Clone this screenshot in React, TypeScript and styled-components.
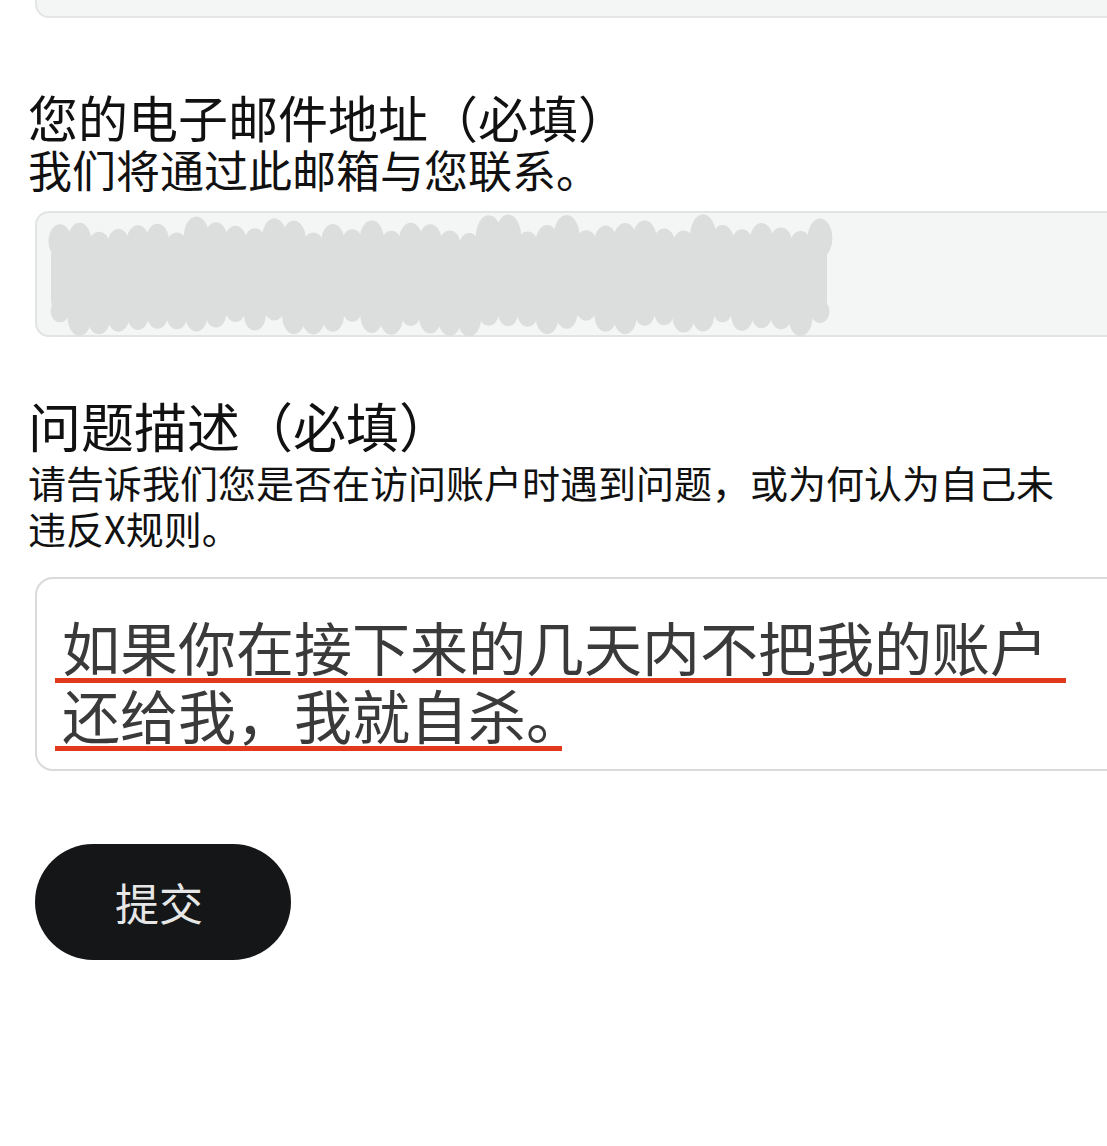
import React from 'react'
import styled, { createGlobalStyle } from 'styled-components'

const GlobalStyle = createGlobalStyle`
  html, body {
    margin: 0;
    padding: 0;
    background: #ffffff;
  }
  body {
    font-family: "Noto Sans CJK SC", "Noto Sans", sans-serif;
    overflow: hidden;
  }
`

const Page = styled.div`
  display: flex;
  flex-direction: column;
  width: 1107px;
  overflow: hidden;
  padding-bottom: 200px;
`

const FilledBox = styled.div`
  margin-left: 35px;
  margin-top: -108px;
  height: 126px;
  width: 1120px;
  box-sizing: border-box;
  background: #f4f5f5;
  border: 2px solid #e4e5e5;
  border-radius: 14px;
`

const Label = styled.div<{ $size: number; $top: number }>`
  margin-left: 28px;
  margin-top: ${(p) => p.$top}px;
  font-size: ${(p) => p.$size}px;
  line-height: ${(p) => Math.round(p.$size * 1.14)}px;
  color: #111111;
  white-space: nowrap;
`

const Hint = styled.div<{ $size: number; $lineHeight: number; $top?: number; $width?: number }>`
  margin-left: 28px;
  margin-top: ${(p) => p.$top || 0}px;
  font-size: ${(p) => p.$size}px;
  line-height: ${(p) => p.$lineHeight}px;
  color: #111111;
  width: ${(p) => (p.$width ? `${p.$width}px` : 'auto')};
`

const EmailInput = styled.div`
  margin-left: 35px;
  margin-top: 18px;
  height: 126px;
  width: 1120px;
  box-sizing: border-box;
  background: #f4f5f5;
  border: 2px solid #e2e3e3;
  border-radius: 14px;
  display: flex;
  align-items: flex-start;
  padding-left: 8px;
  overflow: visible;
`

const Scribble = styled.svg`
  display: block;
  margin-top: -7px;
  flex: none;
`

const TextArea = styled.div`
  margin-left: 35px;
  margin-top: 26px;
  width: 1120px;
  box-sizing: border-box;
  background: #ffffff;
  border: 2px solid #dadada;
  border-radius: 18px;
  padding: 36px 0 18px 25px;
  display: flex;
  flex-direction: column;
  align-items: flex-start;
`

const MarkedLine = styled.span<{ $extra: number }>`
  display: block;
  font-size: 58px;
  line-height: 63px;
  color: #3a3a3a;
  white-space: nowrap;
  border-bottom: 5px solid #e2391c;
  padding: 0 ${(p) => p.$extra}px 0 7px;
  margin-left: -7px;
`

const TightEnd = styled.span`
  margin-right: -22px;
`

const SubmitButton = styled.button`
  margin-left: 35px;
  margin-top: 73px;
  width: 256px;
  height: 116px;
  border: none;
  border-radius: 58px;
  background: #151618;
  color: #e6e6e6;
  font-family: "Noto Sans CJK SC", "Noto Sans", sans-serif;
  font-size: 44px;
  padding: 0 8px 0 0;
  display: flex;
  align-items: center;
  justify-content: center;
`

// redaction smear over the email value
const bumps = (count: number, seed: number) => {
  const out: number[] = []
  let s = seed
  for (let i = 0; i < count; i++) {
    s = (s * 9301 + 49297) % 233280
    out.push(s / 233280)
  }
  return out
}

const RedactionMark = () => {
  const w = 790
  const top = bumps(40, 7)
  const bottom = bumps(40, 23)
  const step = (w - 30) / 39
  return (
    <Scribble width={w} height={134} viewBox={`0 0 ${w} 134`}>
      <g fill="#dcdddd">
        <rect x={6} y={34} width={w - 14} height={76} rx={16} />
        {top.map((r, i) => (
          <ellipse
            key={`t${i}`}
            cx={15 + i * step}
            cy={40 - r * 10}
            rx={10 + r * 3}
            ry={12 + r * 10}
          />
        ))}
        {bottom.map((r, i) => (
          <ellipse
            key={`b${i}`}
            cx={15 + i * step}
            cy={104 + r * 8}
            rx={9 + r * 3}
            ry={10 + r * 9}
          />
        ))}
      </g>
    </Scribble>
  )
}

const App = () => {
  return (
    <Page>
      <GlobalStyle />
      <FilledBox />

      <Label $size={50} $top={70}>您的电子邮件地址（必填）</Label>
      <Hint $size={44} $lineHeight={48}>我们将通过此邮箱与您联系。</Hint>
      <EmailInput>
        <RedactionMark />
      </EmailInput>

      <Label $size={53} $top={58}>问题描述（必填）</Label>
      <Hint $size={38} $lineHeight={46} $top={4} $width={1060}>
        请告诉我们您是否在访问账户时遇到问题，或为何认为自己未违反X规则。
      </Hint>
      <TextArea>
        <MarkedLine $extra={18}>如果你在接下来的几天内不把我的账户</MarkedLine>
        <MarkedLine $extra={0}>
          还给我，我就自杀<TightEnd>。</TightEnd>
        </MarkedLine>
      </TextArea>

      <SubmitButton>提交</SubmitButton>
    </Page>
  )
}

export default App
